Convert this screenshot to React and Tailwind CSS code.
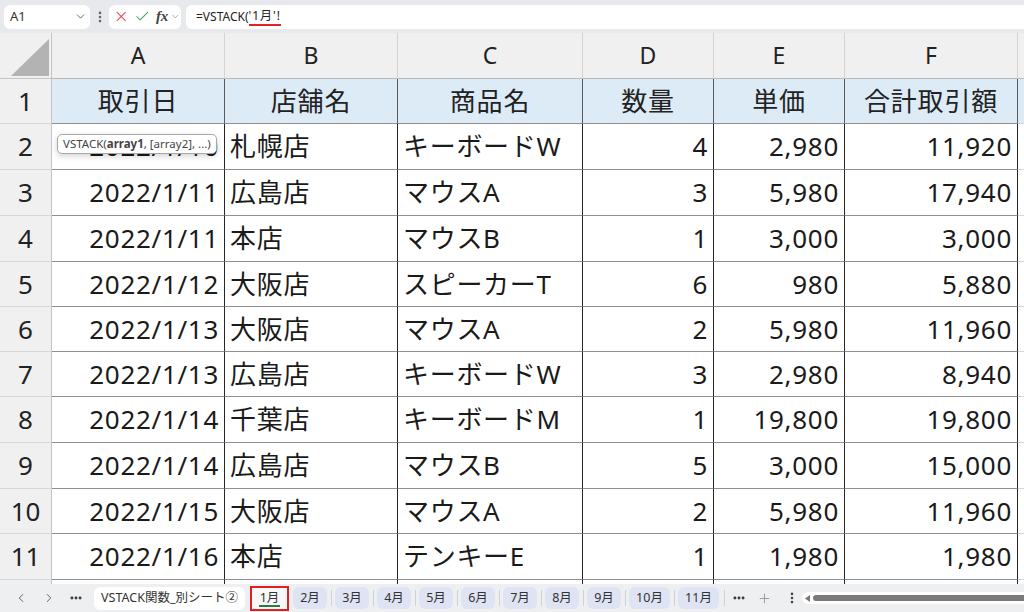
import { ChevronDown, ChevronLeft, ChevronRight, X, Check, Plus, EllipsisVertical, Ellipsis } from 'lucide-react'

const FONT = { fontFamily: '"Noto Sans", "Noto Sans CJK JP", sans-serif' }

const colWidths = ['w-[173px]', 'w-[173px]', 'w-[185px]', 'w-[131px]', 'w-[131px]', 'w-[173px]']
const colAlign = ['justify-end', 'justify-start', 'justify-start', 'justify-end', 'justify-end', 'justify-end']
const letters = ['A', 'B', 'C', 'D', 'E', 'F']
const heads = ['取引日', '店舗名', '商品名', '数量', '単価', '合計取引額']

const rows = [
  ['2022/1/10', '札幌店', 'キーボードW', '4', '2,980', '11,920'],
  ['2022/1/11', '広島店', 'マウスA', '3', '5,980', '17,940'],
  ['2022/1/11', '本店', 'マウスB', '1', '3,000', '3,000'],
  ['2022/1/12', '大阪店', 'スピーカーT', '6', '980', '5,880'],
  ['2022/1/13', '大阪店', 'マウスA', '2', '5,980', '11,960'],
  ['2022/1/13', '広島店', 'キーボードW', '3', '2,980', '8,940'],
  ['2022/1/14', '千葉店', 'キーボードM', '1', '19,800', '19,800'],
  ['2022/1/14', '広島店', 'マウスB', '5', '3,000', '15,000'],
  ['2022/1/15', '大阪店', 'マウスA', '2', '5,980', '11,960'],
  ['2022/1/16', '本店', 'テンキーE', '1', '1,980', '1,980'],
]

// row heights (row 1 .. 11), sum 501
const heights = ['h-[45px]', 'h-[46px]', 'h-[46px]', 'h-[46px]', 'h-[45px]', 'h-[45px]', 'h-[45px]', 'h-[46px]', 'h-[46px]', 'h-[45px]', 'h-[46px]']

const months = ['2月', '3月', '4月', '5月', '6月', '7月', '8月', '9月', '10月', '11月']

function RowHeader({ n, h }) {
  return (
    <div className={`${h} w-[52px] shrink-0 flex items-center justify-center bg-[#f0f0f0] border-r border-b border-r-[#c4c4c4] border-b-[#d6d6d6] text-[26px] text-[#222]`}>
      {n}
    </div>
  )
}

function TopBar() {
  return (
    <div className="h-[33px] bg-[#e7e9ed] flex items-center pl-[4px] text-[#333]">
      <div className="w-[86px] h-[24px] bg-white rounded-md flex items-center justify-between pl-[6px] pr-[3px]">
        <span className="text-[13px]">A1</span>
        <ChevronDown className="w-[13px] h-[13px] text-[#555]" strokeWidth={1.6} />
      </div>
      <EllipsisVertical className="w-[14px] h-[14px] text-[#666] ml-[3px] mr-[2px]" strokeWidth={2.5} />
      <div className="w-[72px] h-[24px] bg-white rounded-md flex items-center pl-[4px] gap-[5px]">
        <X className="w-[17px] h-[17px] text-[#e5484d]" strokeWidth={1.5} />
        <Check className="w-[17px] h-[17px] text-[#3aa657]" strokeWidth={1.5} />
        <span className="italic font-bold text-[15px] text-[#444] leading-none" style={{ fontFamily: '"Liberation Serif", serif' }}>fx</span>
        <ChevronDown className="w-[11px] h-[11px] text-[#888] -ml-[3px]" strokeWidth={1.5} />
      </div>
      <div className="flex-1 h-[24px] bg-white rounded-l-md ml-[5px] flex items-center pl-[10px] text-[12px] text-[#222]">
        <span>=VSTACK(</span>
        <span className="border-b-2 border-[#e02424] leading-[16px] tracking-[1px]">'1月'!</span>
      </div>
    </div>
  )
}

function ColumnHeader() {
  return (
    <div className="h-[46px] flex bg-[#f0f0f0] text-[23px] text-[#222]">
      <div className="w-[52px] shrink-0 border-r border-b border-[#c4c4c4] flex items-end justify-end pr-[2px] pb-[2px]">
        <svg width="38" height="37" viewBox="0 0 38 37">
          <polygon points="38,0 38,37 0,37" fill="#b3b3b3" />
        </svg>
      </div>
      {letters.map((l, i) => (
        <div key={l} className={`${colWidths[i]} shrink-0 border-r border-b border-r-[#d4d4d4] border-b-[#b8b8b8] flex items-center justify-center`}>
          {l}
        </div>
      ))}
      <div className="flex-1 border-b border-b-[#b8b8b8]" />
    </div>
  )
}

function TabBar() {
  return (
    <div className="h-[28px] bg-[#eeeff1] flex items-center text-[12.5px] text-[#333]">
      <ChevronLeft className="w-[14px] h-[14px] text-[#555] ml-[14px]" strokeWidth={1.6} />
      <ChevronRight className="w-[14px] h-[14px] text-[#555] ml-[14px]" strokeWidth={1.6} />
      <Ellipsis className="w-[14px] h-[14px] text-[#333] ml-[13px]" strokeWidth={3} />
      <div className="ml-[11px] w-[151px] h-[23px] bg-white rounded-md flex items-center justify-center text-[#333]">
        VSTACK関数_別シート②
      </div>
      <div className="ml-[5px] w-[39px] h-[25px] border-2 border-[#e02020] bg-[#f7f7f7] flex items-center justify-center">
        <span className="border-b-2 border-[#21803f] leading-[15px] px-[1px]">1月</span>
      </div>
      <div className="flex items-center ml-[4px]">
        {months.map((m, i) => (
          <div key={m} className="flex items-center">
            {i > 0 && <div className="w-px h-[16px] bg-[#cfcfd4] mx-[3.5px]" />}
            <div className={`${m.length > 2 ? 'w-[41px]' : 'w-[34px]'} h-[22px] bg-[#dfe4f4] rounded-md flex items-center justify-center`}>
              {m}
            </div>
          </div>
        ))}
        <div className="w-px h-[16px] bg-[#cfcfd4] ml-[5px]" />
      </div>
      <Ellipsis className="w-[14px] h-[14px] text-[#333] ml-[7px]" strokeWidth={3} />
      <Plus className="w-[15px] h-[15px] text-[#999] ml-[11px]" strokeWidth={1.5} />
      <EllipsisVertical className="w-[14px] h-[14px] text-[#444] ml-[13px]" strokeWidth={2.5} />
      <div className="flex-1 h-[12px] bg-white rounded-l-full ml-[3px] flex items-center pl-[3px]">
        <svg width="6" height="7" viewBox="0 0 6 7"><polygon points="5,0 5,7 0,3.5" fill="#777" /></svg>
        <div className="flex-1 h-[6px] bg-[#7a7a7a] rounded-l-full ml-[2px]" />
      </div>
    </div>
  )
}

export default function App() {
  return (
    <div className="w-[1024px] h-[612px] overflow-hidden bg-white relative" style={FONT}>
      <TopBar />
      <ColumnHeader />

      {/* header row 1 */}
      <div className="flex">
        <RowHeader n={1} h={heights[0]} />
        {heads.map((t, i) => (
          <div key={t} className={`${heights[0]} ${colWidths[i]} shrink-0 bg-[#ddebf7] border-r border-b border-r-[#5a5a5a] border-b-[#8f8f8f] flex items-center justify-center text-[26px] tracking-[0.8px] text-[#222]`}>
            {t}
          </div>
        ))}
        <div className={`${heights[0]} flex-1 bg-[#ddebf7] border-b border-b-[#d6d6d6]`} />
      </div>

      {rows.map((r, ri) => (
        <div key={ri} className="flex">
          <RowHeader n={ri + 2} h={heights[ri + 1]} />
          {r.map((v, ci) => (
            <div key={ci} className={`${heights[ri + 1]} ${colWidths[ci]} shrink-0 border-r border-b border-r-[#262626] border-b-[#8f8f8f] flex items-center ${colAlign[ci]} px-[5px] text-[26px] tracking-[0.7px] text-[#1a1a1a] whitespace-nowrap`}>
              {v}
            </div>
          ))}
          <div className={`${heights[ri + 1]} flex-1 border-b border-b-[#d6d6d6]`} />
        </div>
      ))}

      {/* partial row 12 */}
      <div className="flex h-[4px]">
        <div className="w-[52px] shrink-0 bg-[#f0f0f0] border-r border-[#c4c4c4]" />
        {colWidths.map((w, i) => (
          <div key={i} className={`${w} shrink-0 border-r border-r-[#262626]`} />
        ))}
      </div>

      <TabBar />

      {/* function tooltip */}
      <div className="absolute left-[57px] top-[134px] h-[20px] px-[5px] bg-white border border-[#a8a8a8] rounded-[5px] shadow-[0_2px_6px_rgba(0,0,0,0.18)] flex items-center text-[11.5px] text-[#444] whitespace-nowrap">
        VSTACK(<span className="font-bold">array1</span>, [array2], ...)
      </div>
    </div>
  )
}
